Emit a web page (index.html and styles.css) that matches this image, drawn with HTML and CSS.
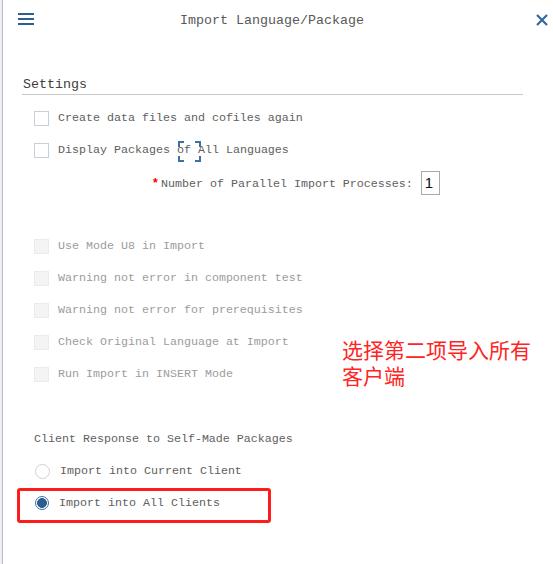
FILE: index.html
```html
<!DOCTYPE html>
<html lang="en">
<head>
<meta charset="utf-8">
<title>Import Language/Package</title>
<link rel="stylesheet" href="styles.css">
</head>
<body>
<div class="frame">
  <header class="bar">
    <span class="menu" aria-label="Menu">
      <svg width="16" height="12" viewBox="0 0 16 12"><rect x="0" y="0" width="16" height="2" fill="#2e5f8c"/><rect x="0" y="5" width="16" height="2" fill="#2e5f8c"/><rect x="0" y="10" width="16" height="2" fill="#2e5f8c"/></svg>
    </span>
    <h1 class="title">Import Language/Package</h1>
    <span class="close" aria-label="Close">
      <svg width="12" height="12" viewBox="0 0 12 12"><path d="M1 1 L11 11 M11 1 L1 11" stroke="#2e6aa0" stroke-width="2.2" fill="none"/></svg>
    </span>
  </header>

  <main class="content">
    <section class="settings">
      <h2 class="sec-title">Settings</h2>
      <div class="row"><span class="cb"></span><span>Create data files and cofiles again</span></div>
      <div class="row"><span class="cb"></span><span>Display Packages <span class="focus">of </span>All Languages</span></div>
      <div class="row num"><span class="req">*</span><span class="num-label">Number of Parallel Import Processes:</span><span class="field">1</span></div>
      <div class="row spacer"></div>
      <div class="row dis"><span class="cb"></span><span>Use Mode U8 in Import</span></div>
      <div class="row dis"><span class="cb"></span><span>Warning not error in component test</span></div>
      <div class="row dis"><span class="cb"></span><span>Warning not error for prerequisites</span></div>
      <div class="row dis"><span class="cb"></span><span>Check Original Language at Import</span></div>
      <div class="row dis"><span class="cb"></span><span>Run Import in INSERT Mode</span></div>
    </section>

    <section class="client">
      <div class="row label">Client Response to Self-Made Packages</div>
      <div class="row"><span class="rb"></span><span>Import into Current Client</span></div>
      <div class="row marked"><span class="rb on"></span><span>Import into All Clients</span><span class="mark"></span></div>
    </section>

    <div class="note">选择第二项导入所有<br>客户端</div>
  </main>
</div>
</body>
</html>
```

FILE: styles.css
```css
html, body {
  margin: 0;
  padding: 0;
  background: #ffffff;
}
body {
  width: 553px;
  height: 564px;
  overflow: hidden;
  font-family: "Liberation Mono", "DejaVu Sans Mono", monospace;
  color: #606060;
  background: linear-gradient(90deg, #eceff3 0, #eceff3 2px, #b9bdc3 2px, #b9bdc3 3px, #ffffff 3px);
}
.frame {
  margin-left: 3px;
  height: 564px;
  position: relative;
}
.bar {
  height: 38px;
  display: flex;
  align-items: center;
  padding: 0 5px 0 15px;
}
.menu {
  display: flex;
  width: 16px;
  height: 12px;
}
.title {
  flex: 1;
  margin: 2px 0 0 0;
  padding-right: 26px;
  text-align: center;
  font-weight: normal;
  font-size: 13.33px;
  color: #585858;
}
.close {
  display: flex;
  width: 12px;
  height: 12px;
  margin-top: 1px;
}
.content {
  position: relative;
}
.sec-title {
  margin: 38px 30px 7px 19px;
  padding: 0 0 1px 1px;
  font-weight: normal;
  font-size: 13.33px;
  line-height: 17px;
  color: #404040;
  border-bottom: 1px solid #c9c9c9;
}
.row {
  height: 32px;
  display: flex;
  align-items: center;
  padding-left: 31px;
  font-size: 11.67px;
  white-space: pre;
  position: relative;
}
.cb {
  width: 13px;
  height: 13px;
  border: 1px solid #cfcbd8;
  border-right-color: #bcd3e6;
  background: #ffffff;
  margin-right: 9px;
  flex: none;
}
.focus {
  position: relative;
}
.focus::before {
  content: "";
  position: absolute;
  left: 1px;
  top: -2px;
  width: 23px;
  height: 21px;
  --c: #3a72a8;
  background:
    linear-gradient(var(--c), var(--c)) left top / 6px 2px no-repeat,
    linear-gradient(var(--c), var(--c)) left top / 2px 6px no-repeat,
    linear-gradient(var(--c), var(--c)) right top / 6px 2px no-repeat,
    linear-gradient(var(--c), var(--c)) right top / 2px 6px no-repeat,
    linear-gradient(var(--c), var(--c)) left bottom / 6px 2px no-repeat,
    linear-gradient(var(--c), var(--c)) left bottom / 2px 6px no-repeat,
    linear-gradient(var(--c), var(--c)) right bottom / 6px 2px no-repeat,
    linear-gradient(var(--c), var(--c)) right bottom / 2px 6px no-repeat;
}
.num {
  padding-left: 150px;
}
.req {
  color: #ee0000;
  font-family: "Liberation Sans", sans-serif;
  font-weight: bold;
  font-size: 12px;
  width: 8px;
  margin-top: 1px;
}
.num-label {
  margin-top: 4px;
}
.field {
  width: 17px;
  height: 22px;
  border: 1px solid #a9a9a9;
  margin-left: 8px;
  margin-top: 1px;
  font-family: "Liberation Sans", sans-serif;
  font-size: 15px;
  line-height: 22px;
  color: #111111;
  text-indent: 3px;
}
.dis {
  color: #9c9c9c;
}
.dis .cb {
  background: #f4f4f4;
  border-color: #ebebeb;
}
.client {
  margin-top: 33px;
}
.label {
  color: #606060;
}
.rb {
  width: 13px;
  height: 13px;
  border: 1px solid #d4d0cc;
  border-radius: 50%;
  margin: 0 10px 0 1px;
  background: #ffffff;
  flex: none;
}
.rb.on {
  border: 1.5px solid #3b72aa;
  width: 12px;
  height: 12px;
  background: radial-gradient(circle, #2c5d8d 0, #2c5d8d 4.6px, #ffffff 5.2px);
}
.mark {
  position: absolute;
  left: 14px;
  top: 1px;
  width: 248px;
  height: 29px;
  border: 3px solid #ff1c1c;
  border-radius: 3px;
}
.note {
  position: absolute;
  left: 339px;
  top: 260px;
  font-family: "Noto Sans CJK SC", sans-serif;
  font-size: 21px;
  line-height: 26px;
  color: #ff2424;
}
```
